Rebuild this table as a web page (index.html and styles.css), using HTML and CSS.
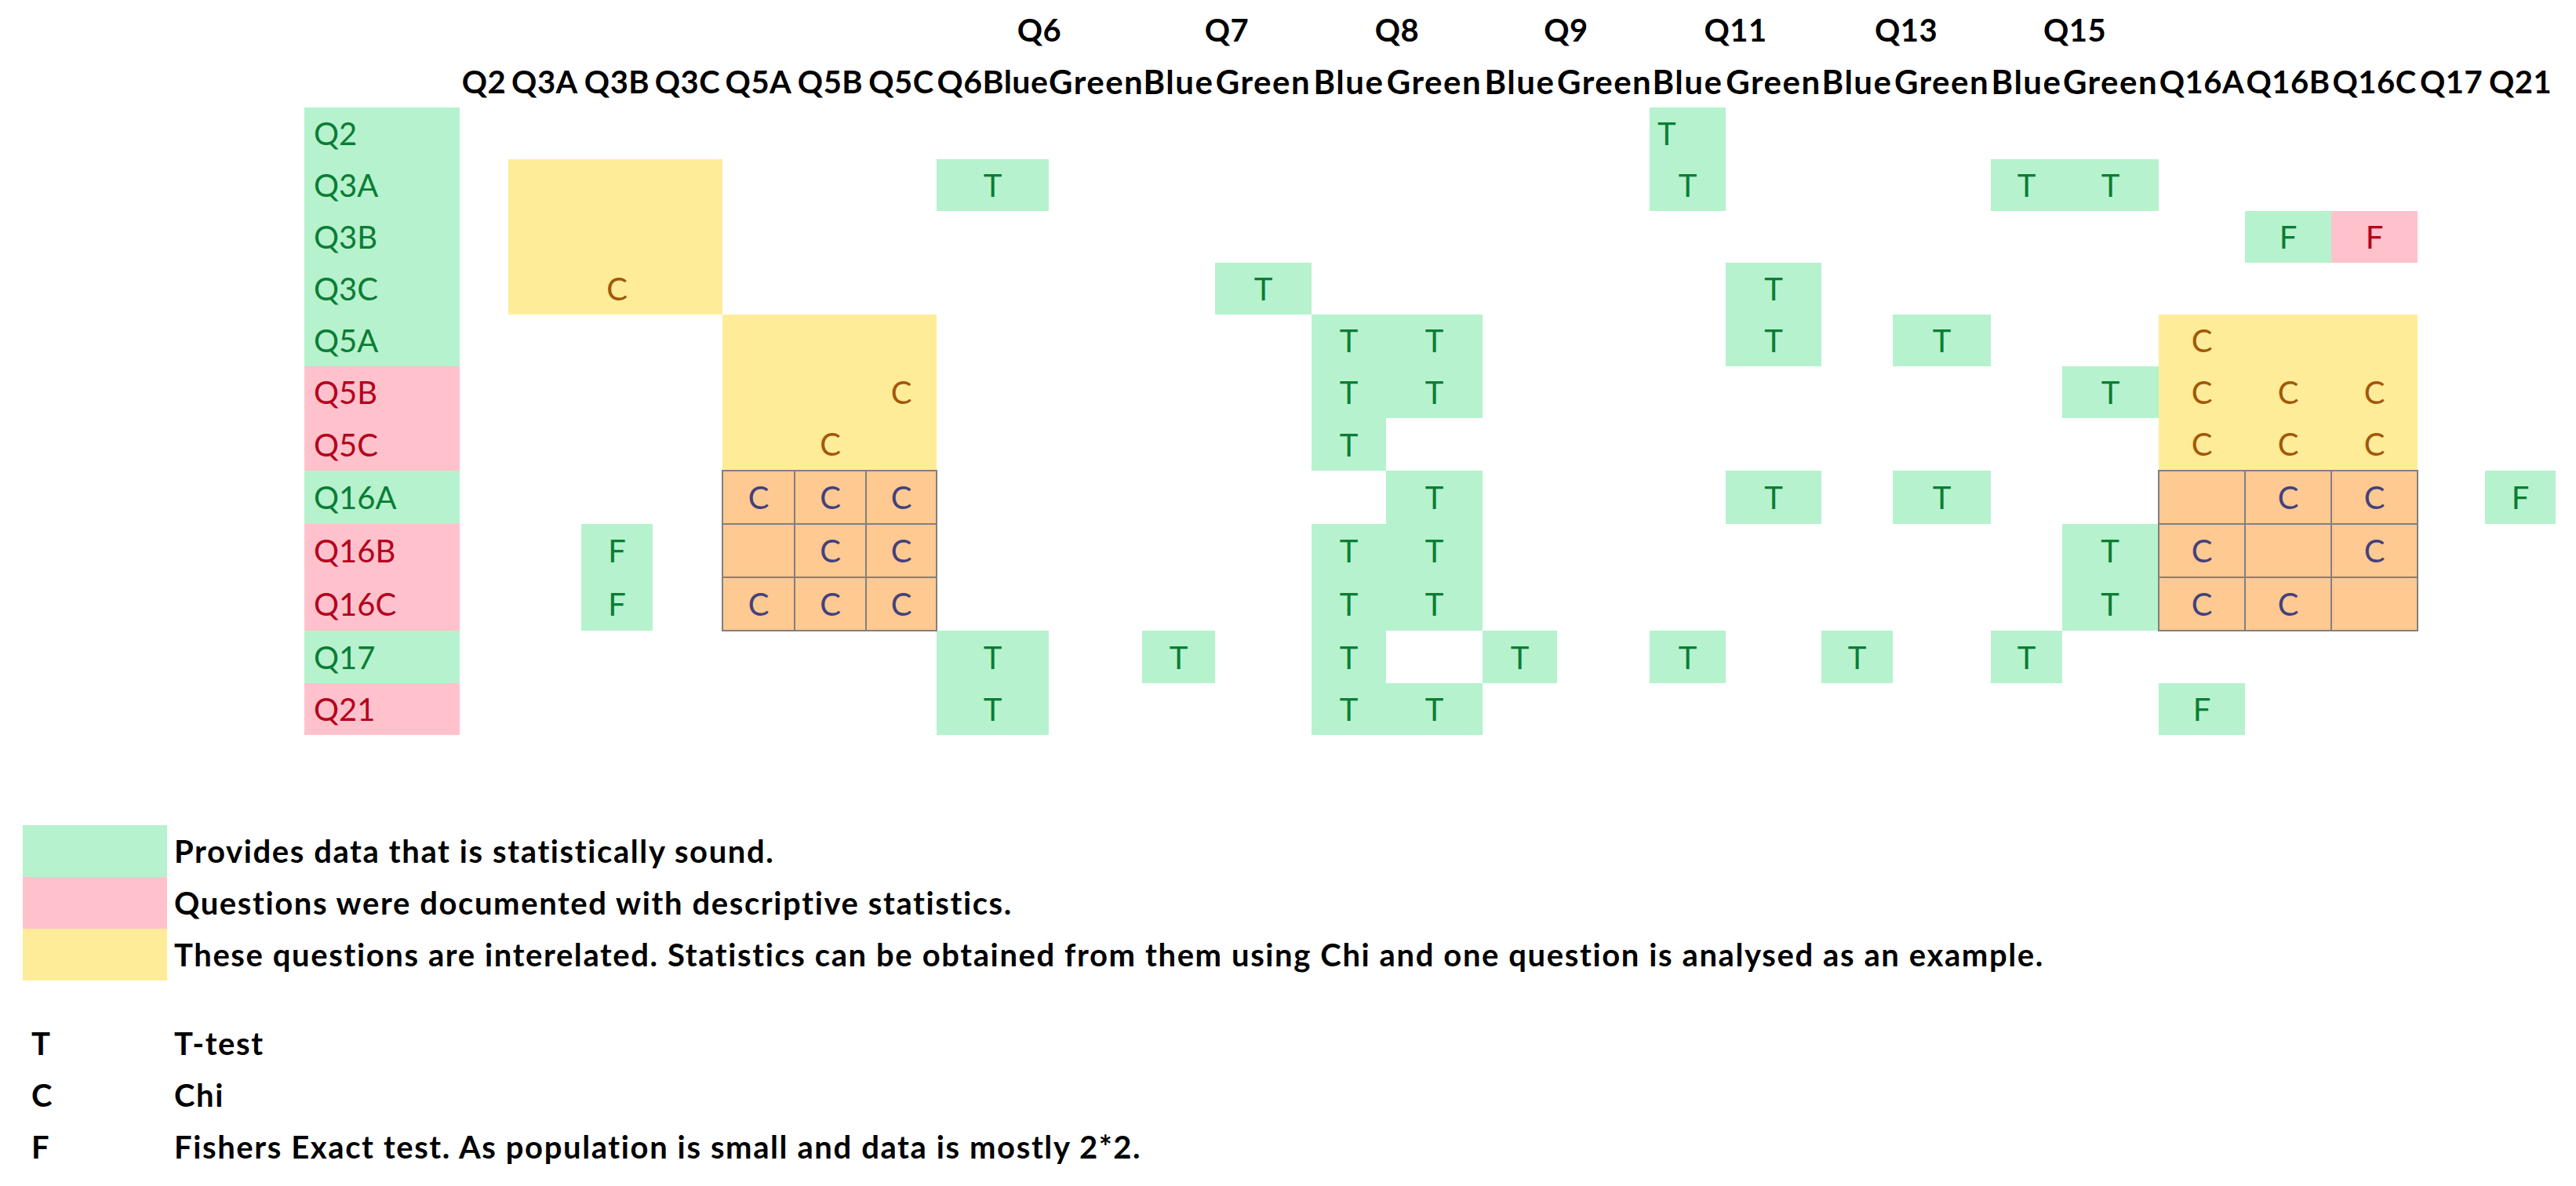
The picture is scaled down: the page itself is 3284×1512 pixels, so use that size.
FILE: index.html
```html
<!DOCTYPE html>
<html lang="en">
<head>
<meta charset="utf-8">
<title>Statistical tests matrix</title>
<link rel="stylesheet" href="styles.css">
</head>
<body>
<table class="matrix">
  <colgroup>
    <col class="w198"><col class="w62"><col class="w93"><col class="w91"><col class="w89"><col class="w92"><col class="w91"><col class="w90">
    <col class="w143"><col class="w119"><col class="w93"><col class="w123"><col class="w95"><col class="w123"><col class="w95"><col class="w118">
    <col class="w97"><col class="w122"><col class="w91"><col class="w125"><col class="w91"><col class="w123">
    <col class="w110"><col class="w110"><col class="w110"><col class="w86"><col class="w90">
  </colgroup>
  <thead>
    <tr class="hrow">
      <th></th><th></th><th></th><th></th><th></th><th></th><th></th><th></th>
      <th colspan="2">Q6</th><th colspan="2">Q7</th><th colspan="2">Q8</th><th colspan="2">Q9</th>
      <th colspan="2">Q11</th><th colspan="2">Q13</th><th colspan="2">Q15</th>
      <th></th><th></th><th></th><th></th><th></th>
    </tr>
    <tr class="hrow">
      <th></th><th>Q2</th><th>Q3A</th><th>Q3B</th><th>Q3C</th><th>Q5A</th><th>Q5B</th><th>Q5C</th>
      <th class="first">Q6Blue</th><th class="word">Green</th><th class="word">Blue</th><th class="word">Green</th><th class="word">Blue</th><th class="word">Green</th><th class="word">Blue</th><th class="word">Green</th>
      <th class="word">Blue</th><th class="word">Green</th><th class="word">Blue</th><th class="word">Green</th><th class="word">Blue</th><th class="word">Green</th>
      <th>Q16A</th><th>Q16B</th><th>Q16C</th><th>Q17</th><th>Q21</th>
    </tr>
  </thead>
  <tbody>
    <tr>
      <th class="rh g">Q2</th>
      <td></td><td></td><td></td><td></td><td></td><td></td><td></td>
      <td></td><td></td><td></td><td></td><td></td><td></td><td></td><td></td>
      <td class="g left">T</td><td></td><td></td><td></td><td></td><td></td>
      <td></td><td></td><td></td><td></td><td></td>
    </tr>
    <tr>
      <th class="rh g">Q3A</th>
      <td></td><td class="y"></td><td class="y"></td><td class="y"></td><td></td><td></td><td></td>
      <td class="g">T</td><td></td><td></td><td></td><td></td><td></td><td></td><td></td>
      <td class="g">T</td><td></td><td></td><td></td><td class="g">T</td><td class="g">T</td>
      <td></td><td></td><td></td><td></td><td></td>
    </tr>
    <tr>
      <th class="rh g">Q3B</th>
      <td></td><td class="y"></td><td class="y"></td><td class="y"></td><td></td><td></td><td></td>
      <td></td><td></td><td></td><td></td><td></td><td></td><td></td><td></td>
      <td></td><td></td><td></td><td></td><td></td><td></td>
      <td></td><td class="g">F</td><td class="r">F</td><td></td><td></td>
    </tr>
    <tr>
      <th class="rh g">Q3C</th>
      <td></td><td class="y"></td><td class="y">C</td><td class="y"></td><td></td><td></td><td></td>
      <td></td><td></td><td></td><td class="g">T</td><td></td><td></td><td></td><td></td>
      <td></td><td class="g">T</td><td></td><td></td><td></td><td></td>
      <td></td><td></td><td></td><td></td><td></td>
    </tr>
    <tr>
      <th class="rh g">Q5A</th>
      <td></td><td></td><td></td><td></td><td class="y"></td><td class="y"></td><td class="y"></td>
      <td></td><td></td><td></td><td></td><td class="g">T</td><td class="g">T</td><td></td><td></td>
      <td></td><td class="g">T</td><td></td><td class="g">T</td><td></td><td></td>
      <td class="y">C</td><td class="y"></td><td class="y"></td><td></td><td></td>
    </tr>
    <tr>
      <th class="rh r">Q5B</th>
      <td></td><td></td><td></td><td></td><td class="y"></td><td class="y"></td><td class="y">C</td>
      <td></td><td></td><td></td><td></td><td class="g">T</td><td class="g">T</td><td></td><td></td>
      <td></td><td></td><td></td><td></td><td></td><td class="g">T</td>
      <td class="y">C</td><td class="y">C</td><td class="y">C</td><td></td><td></td>
    </tr>
    <tr>
      <th class="rh r">Q5C</th>
      <td></td><td></td><td></td><td></td><td class="y"></td><td class="y">C</td><td class="y"></td>
      <td></td><td></td><td></td><td></td><td class="g">T</td><td></td><td></td><td></td>
      <td></td><td></td><td></td><td></td><td></td><td></td>
      <td class="y">C</td><td class="y">C</td><td class="y">C</td><td></td><td></td>
    </tr>
    <tr>
      <th class="rh g">Q16A</th>
      <td></td><td></td><td></td><td></td><td class="o">C</td><td class="o">C</td><td class="o">C</td>
      <td></td><td></td><td></td><td></td><td></td><td class="g">T</td><td></td><td></td>
      <td></td><td class="g">T</td><td></td><td class="g">T</td><td></td><td></td>
      <td class="o"></td><td class="o">C</td><td class="o">C</td><td></td><td class="g">F</td>
    </tr>
    <tr>
      <th class="rh r">Q16B</th>
      <td></td><td></td><td class="g">F</td><td></td><td class="o"></td><td class="o">C</td><td class="o">C</td>
      <td></td><td></td><td></td><td></td><td class="g">T</td><td class="g">T</td><td></td><td></td>
      <td></td><td></td><td></td><td></td><td></td><td class="g">T</td>
      <td class="o">C</td><td class="o"></td><td class="o">C</td><td></td><td></td>
    </tr>
    <tr>
      <th class="rh r">Q16C</th>
      <td></td><td></td><td class="g">F</td><td></td><td class="o">C</td><td class="o">C</td><td class="o">C</td>
      <td></td><td></td><td></td><td></td><td class="g">T</td><td class="g">T</td><td></td><td></td>
      <td></td><td></td><td></td><td></td><td></td><td class="g">T</td>
      <td class="o">C</td><td class="o">C</td><td class="o"></td><td></td><td></td>
    </tr>
    <tr>
      <th class="rh g">Q17</th>
      <td></td><td></td><td></td><td></td><td></td><td></td><td></td>
      <td class="g">T</td><td></td><td class="g">T</td><td></td><td class="g">T</td><td></td><td class="g">T</td><td></td>
      <td class="g">T</td><td></td><td class="g">T</td><td></td><td class="g">T</td><td></td>
      <td></td><td></td><td></td><td></td><td></td>
    </tr>
    <tr>
      <th class="rh r">Q21</th>
      <td></td><td></td><td></td><td></td><td></td><td></td><td></td>
      <td class="g">T</td><td></td><td></td><td></td><td class="g">T</td><td class="g">T</td><td></td><td></td>
      <td></td><td></td><td></td><td></td><td></td><td></td>
      <td class="g">F</td><td></td><td></td><td></td><td></td>
    </tr>
  </tbody>
</table>

<div class="legend">
  <div class="swatch g"></div><div class="ltext">Provides data that is statistically sound.</div>
  <div class="swatch r"></div><div class="ltext">Questions were documented with descriptive statistics.</div>
  <div class="swatch y"></div><div class="ltext">These questions are interelated. Statistics can be obtained from them using Chi and one question is analysed as an example.</div>
</div>

<div class="key">
  <div class="kletter">T</div><div class="ltext">T-test</div>
  <div class="kletter">C</div><div class="ltext">Chi</div>
  <div class="kletter">F</div><div class="ltext">Fishers Exact test. As population is small and data is mostly 2*2.</div>
</div>
</body>
</html>
```

FILE: styles.css
```css
html, body {
  margin: 0;
  padding: 0;
  background: #ffffff;
}

body {
  font-family: Lato, "Open Sans", "Liberation Sans", sans-serif;
  font-size: 40px;
  color: #000000;
  width: 3284px;
  height: 1512px;
  overflow: hidden;
}

.matrix {
  table-layout: fixed;
  border-collapse: collapse;
  width: 2870px;
  margin: 5px 0 0 388px;
}

.w62 { width: 62px; }
.w86 { width: 86px; }
.w89 { width: 89px; }
.w90 { width: 90px; }
.w91 { width: 91px; }
.w92 { width: 92px; }
.w93 { width: 93px; }
.w95 { width: 95px; }
.w97 { width: 97px; }
.w110 { width: 110px; }
.w118 { width: 118px; }
.w119 { width: 119px; }
.w122 { width: 122px; }
.w123 { width: 123px; }
.w125 { width: 125px; }
.w143 { width: 143px; }
.w198 { width: 198px; }

.matrix tr {
  height: 66px;
}

.matrix th,
.matrix td {
  padding: 0;
  height: 66px;
  text-align: center;
  vertical-align: middle;
  white-space: nowrap;
  overflow: visible;
  line-height: 48px;
}

.hrow th {
  font-weight: 700;
  font-size: 40px;
  letter-spacing: 0.5px;
  color: #000000;
}

.hrow th.word {
  font-size: 42px;
  letter-spacing: 1.5px;
}

.hrow th.first {
  font-size: 41px;
  letter-spacing: 0.5px;
}

.matrix .rh {
  font-weight: 400;
  text-align: left;
  padding-left: 12px;
}

.matrix .left {
  text-align: left;
  padding-left: 10px;
}

.g { background: #b6f2cd; color: #0b7d35; }
.r { background: #ffc2cc; color: #b5001c; }
.y { background: #ffec99; color: #a2580a; }
.o {
  background: #ffc992;
  color: #43417c;
  border: 2px solid #808080;
}

.legend,
.key {
  display: grid;
  grid-template-columns: 184px auto;
  grid-auto-rows: 66px;
  margin-left: 29px;
  font-weight: 700;
}

.legend {
  margin-top: 115px;
}

.key {
  margin-top: 47px;
}

.swatch {
  height: 66px;
}

.ltext {
  padding-left: 9px;
  line-height: 66px;
  white-space: nowrap;
  letter-spacing: 1.6px;
}

.kletter {
  padding-left: 11px;
  line-height: 66px;
}
```
